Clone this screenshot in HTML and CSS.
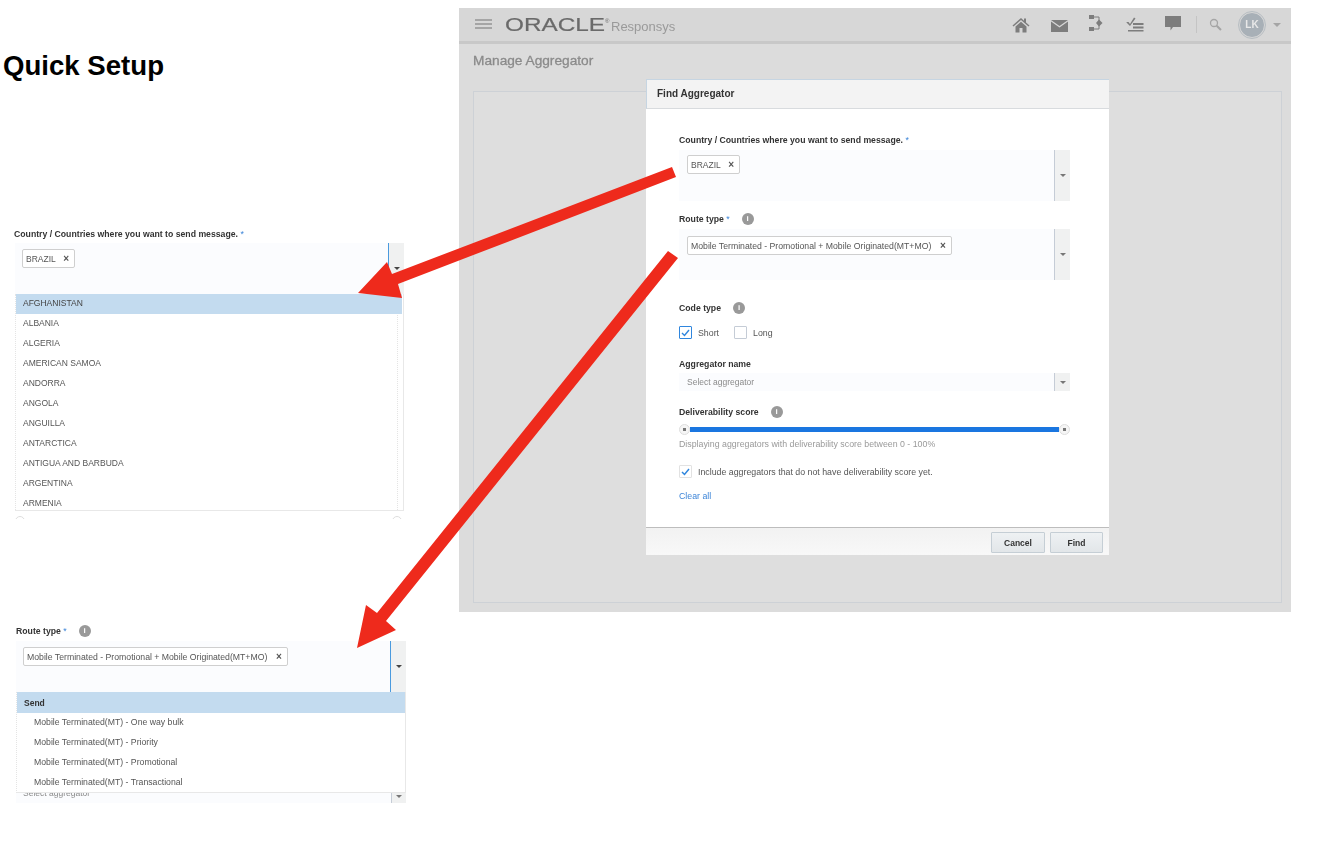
FILE: index.html
```html
<!DOCTYPE html>
<html lang="en">
<head>
    <meta charset="UTF-8">
    <meta name="viewport" content="width=device-width, initial-scale=1.0">
    <title>Quick Setup</title>
    <link rel="stylesheet" href="styles.css">
</head>
<body>
<div class="slide">
    <!-- Left column: title and the two open pickers -->
    <div class="left-col">
        <h1 class="slide-title">Quick Setup</h1>

        <div class="picker picker-country">
            <div class="label label-outdent">Country / Countries where you want to send message. <span class="req">*</span></div>
            <div class="field field-tall field-focus">
                <div class="field-main"><span class="chip"><span class="chip-text">BRAZIL</span><span class="chip-x">×</span></span></div>
                <div class="field-arrow"><span class="caret caret-dark"></span></div>
            </div>
            <div class="list list-country">
                <div class="list-inner">
                    <div class="opt opt-active">AFGHANISTAN</div>
                    <div class="opt">ALBANIA</div>
                    <div class="opt">ALGERIA</div>
                    <div class="opt">AMERICAN SAMOA</div>
                    <div class="opt">ANDORRA</div>
                    <div class="opt">ANGOLA</div>
                    <div class="opt">ANGUILLA</div>
                    <div class="opt">ANTARCTICA</div>
                    <div class="opt">ANTIGUA AND BARBUDA</div>
                    <div class="opt">ARGENTINA</div>
                    <div class="opt">ARMENIA</div>
                </div>
            </div>
            <div class="peek-handles"><span class="peek-handle"></span><span class="peek-handle"></span></div>
        </div>

        <div class="picker picker-route">
            <div class="label">Route type <span class="req">*</span><span class="info info-left">i</span></div>
            <div class="field field-tall field-focus">
                <div class="field-main"><span class="chip chip-long"><span class="chip-text">Mobile Terminated - Promotional + Mobile Originated(MT+MO)</span><span class="chip-x">×</span></span></div>
                <div class="field-arrow"><span class="caret caret-dark"></span></div>
            </div>
            <div class="list list-route">
                <div class="opt opt-active opt-group">Send</div>
                <div class="opt opt-sub">Mobile Terminated(MT) - One way bulk</div>
                <div class="opt opt-sub">Mobile Terminated(MT) - Priority</div>
                <div class="opt opt-sub">Mobile Terminated(MT) - Promotional</div>
                <div class="opt opt-sub">Mobile Terminated(MT) - Transactional</div>
            </div>
            <div class="peek-select">
                <span class="peek-text">Select aggregator</span>
                <div class="peek-arrow"><span class="caret"></span></div>
            </div>
        </div>
    </div>

    <!-- Right: dimmed app with the modal on top -->
    <div class="app">
        <header class="app-header">
            <div class="hamburger"><span></span><span></span><span></span></div>
            <svg class="wordmark" width="106" height="20" viewBox="0 0 106 20"><text x="0" y="16" textLength="100" lengthAdjust="spacingAndGlyphs">ORACLE</text><text class="wordmark-r" x="100" y="8">®</text></svg>
            <span class="product">Responsys</span>
            <div class="header-icons">
                <span class="hicon"><svg width="18" height="16" viewBox="0 0 18 16"><path d="M9 1L0.5 8.5l1 1L9 3l7.500 6.500 1-1L14 5.500V1.500h-2v2.200z" fill="#7d7d7d"/><path d="M3.500 9.500L9 4.700l5.500 4.800V15.500H10.500V11h-3v4.500H3.500z" fill="#7d7d7d"/></svg></span>
                <span class="hicon hicon-low"><svg width="17" height="12" viewBox="0 0 17 12"><path d="M0 0h17L8.500 6z" fill="#7d7d7d"/><path d="M0 1.500L8.500 7.500 17 1.500V12H0z" fill="#7d7d7d"/></svg></span>
                <span class="hicon hicon-high"><svg width="16" height="16" viewBox="0 0 16 16"><rect x="0" y="0" width="5" height="4" fill="#7d7d7d"/><rect x="0" y="12" width="5" height="4" fill="#7d7d7d"/><path d="M5 2h5v4M5 14h5v-4" fill="none" stroke="#7d7d7d"/><path d="M10 4.500l3.500 3.500-3.500 3.500-3-3.500z" fill="#7d7d7d"/></svg></span>
                <span class="hicon"><svg width="18" height="15" viewBox="0 0 18 15"><path d="M0.500 5l2 0 1.500 2L8 0.500l1.500 1L4 9 0.500 5.500z" fill="#7d7d7d"/><path d="M7 6h10.500v2H7zM7 9.500h10.500v2H7zM2 13h15.500v1.500H2z" fill="#7d7d7d"/></svg></span>
                <span class="hicon hicon-high"><svg width="16" height="15" viewBox="0 0 16 15"><path d="M0 0h16v11H8l-2.500 3.500V11H0z" fill="#7d7d7d"/></svg></span>
            </div>
            <span class="header-divider"></span>
            <span class="hicon-search"><svg width="13" height="13" viewBox="0 0 13 13"><circle cx="5" cy="5" r="3.500" fill="none" stroke="#a5a5a5" stroke-width="1.300"/><path d="M7.700 7.700L12 12" stroke="#a5a5a5" stroke-width="2"/></svg></span>
            <span class="avatar">LK</span>
            <span class="caret caret-avatar"></span>
        </header>

        <div class="page-title">Manage Aggregator</div>
        <div class="page-box"></div>

        <div class="modal">
            <div class="modal-head">Find Aggregator</div>
            <div class="modal-body">
                <div class="label">Country / Countries where you want to send message. <span class="req">*</span></div>
                <div class="field field-tall field-first field-country">
                    <div class="field-main"><span class="chip"><span class="chip-text">BRAZIL</span><span class="chip-x">×</span></span></div>
                    <div class="field-arrow"><span class="caret"></span></div>
                </div>

                <div class="label label-route">Route type <span class="req">*</span><span class="info info-route">i</span></div>
                <div class="field field-tall field-first field-route">
                    <div class="field-main"><span class="chip chip-long"><span class="chip-text">Mobile Terminated - Promotional + Mobile Originated(MT+MO)</span><span class="chip-x">×</span></span></div>
                    <div class="field-arrow"><span class="caret"></span></div>
                </div>

                <div class="label label-code">Code type<span class="info info-code">i</span></div>
                <div class="checks">
                    <span class="check check-on"><svg width="9" height="8" viewBox="0 0 9 8"><path d="M1 4l2.500 2.500L8 1" fill="none" stroke="#2f86de" stroke-width="1.400"/></svg></span>
                    <span class="check-text">Short</span>
                    <span class="check check-next"></span>
                    <span class="check-text">Long</span>
                </div>

                <div class="label label-agg">Aggregator name</div>
                <div class="field field-short">
                    <div class="field-main field-main-text">Select aggregator</div>
                    <div class="field-arrow"><span class="caret"></span></div>
                </div>

                <div class="label label-score">Deliverability score<span class="info info-score">i</span></div>
                <div class="slider">
                    <span class="slider-handle"></span>
                    <span class="slider-track"></span>
                    <span class="slider-handle"></span>
                </div>
                <div class="helper">Displaying aggregators with deliverability score between 0 - 100%</div>

                <div class="checks checks-include">
                    <span class="check check-soft"><svg width="9" height="8" viewBox="0 0 9 8"><path d="M1 4l2.500 2.500L8 1" fill="none" stroke="#2f86de" stroke-width="1.500"/></svg></span>
                    <span class="check-text">Include aggregators that do not have deliverability score yet.</span>
                </div>
                <a class="clear-all" href="#">Clear all</a>
            </div>
            <div class="modal-foot">
                <button class="btn">Cancel</button>
                <button class="btn btn-find">Find</button>
            </div>
        </div>
    </div>

    <!-- Red arrows lie over everything -->
    <svg class="arrows" width="1324" height="855" viewBox="0 0 1324 855">
        <polygon points="672,167 676,177 398,284 402,298 358,293 387,262 392,274" fill="#ee2a1c"/>
        <polygon points="668,251 678,258 386,621 396,630 357,648 366,605 377,613" fill="#ee2a1c"/>
    </svg>
</div>
</body>
</html>
```

FILE: styles.css
```css
/* General */
body {
    margin: 0;
    background-color: #fff;
    font-family: "Liberation Sans", Arial, sans-serif;
    color: #444;
}

.slide {
    position: relative;
    display: flex;
    width: 1324px;
    height: 855px;
    overflow: hidden;
}

.left-col {
    width: 459px;
    flex-shrink: 0;
}

.slide-title {
    margin: 51px 0 0 3px;
    font-size: 27.6px;
    line-height: 30px;
    font-weight: bold;
    color: #000;
}

/* Shared form bits */
.label {
    font-size: 8.7px;
    line-height: 12px;
    font-weight: bold;
    color: #333;
    display: flex;
    align-items: center;
    white-space: pre;
}

.req {
    color: #3d85d8;
    font-weight: normal;
}

.info {
    display: inline-block;
    width: 12px;
    height: 12px;
    border-radius: 50%;
    background-color: #999;
    color: #fff;
    font-size: 8px;
    line-height: 12px;
    text-align: center;
    font-weight: bold;
}

.field {
    display: flex;
    background-color: #fbfcfe;
}

.field-tall {
    height: 51px;
}

.field-short {
    height: 18px;
    margin-top: 3px;
}

.field-first {
    margin-top: 4px;
}

.field-main {
    flex: 1;
    display: flex;
    align-items: flex-start;
    padding: 6px 0 0 7px;
    box-sizing: border-box;
}

.field-country .field-main {
    padding: 5px 0 0 8px;
}

.field-route .field-main {
    padding: 7px 0 0 8px;
}

.field-main-text {
    display: block;
    padding: 0 0 0 8px;
    font-size: 8.5px;
    line-height: 18px;
    color: #8a8a8a;
}

.field-arrow {
    width: 15px;
    background-color: #f0f1f1;
    border-left: 1px solid #c5ccd6;
    display: flex;
    align-items: center;
    justify-content: center;
}

.field-focus .field-arrow {
    border-left-color: #4a9ade;
}

.caret {
    width: 0;
    height: 0;
    border-left: 3.5px solid transparent;
    border-right: 3.5px solid transparent;
    border-top: 3px solid #777;
}

.caret-dark {
    border-top-color: #444;
}

.chip {
    display: inline-flex;
    align-items: center;
    box-sizing: border-box;
    height: 19px;
    width: 53px;
    padding: 0 2px 0 3px;
    background-color: #fff;
    border: 1px solid #cfcfcf;
    border-radius: 2px;
    font-size: 8.5px;
    color: #555;
}

.chip-long {
    width: 265px;
    font-size: 8.7px;
}

.chip-text {
    flex: 1;
    white-space: nowrap;
}

.chip-long .chip-text {
    flex: 0 0 244px;
}

.chip-x {
    font-size: 10px;
    font-weight: bold;
    color: #555;
    line-height: 10px;
    margin: 0 3px 0 0;
}

.chip-long .chip-x {
    margin: 0 4px 0 5px;
}

/* Left pickers */
.picker {
    filter: blur(0.25px);
}

.picker-country {
    margin: 147px 0 0 15px;
    width: 389px;
}

.picker-route {
    margin: 106px 0 0 16px;
    width: 390px;
}

.label-outdent {
    margin-left: -1px;
}

.picker .label {
    margin-bottom: 3px;
}

.picker-route .label {
    margin-bottom: 4px;
}

.info-left {
    margin-left: 12px;
}

.list {
    background-color: #fff;
    overflow: hidden;
    box-sizing: border-box;
    border-bottom: 1px solid #e8e8e8;
}

.list-country {
    height: 217px;
    border-right: 1px solid #e8e8e8;
}

.list-inner {
    width: 381px;
    border-left: 1px dotted #e4e4e4;
    border-right: 1px dotted #e4e4e4;
}

.list-route {
    height: 101px;
    border-left: 1px dotted #e4e4e4;
    border-right: 1px solid #e8e8e8;
}

.opt {
    height: 20px;
    line-height: 18px;
    padding-left: 7px;
    font-size: 8.5px;
    color: #555;
    white-space: nowrap;
}

.opt-active {
    background-color: #c3dbef;
    color: #444;
}

.list-inner .opt-active {
    margin-right: -5px;
}

.opt-group {
    height: 21px;
    line-height: 22px;
    font-weight: bold;
    color: #333;
}

.opt-sub {
    padding-left: 17px;
    font-size: 8.7px;
}

.peek-handles {
    display: flex;
    justify-content: space-between;
    height: 3px;
    margin-top: 5px;
    padding: 0 2px 0 0;
    overflow: hidden;
}

.peek-handle {
    width: 10px;
    height: 10px;
    border: 1px solid #ddd;
    border-radius: 50%;
    box-sizing: border-box;
}

.peek-select {
    display: flex;
    height: 10px;
    overflow: hidden;
    background-color: #fbfcfe;
}

.peek-text {
    flex: 1;
    margin-top: -6px;
    padding-left: 7px;
    font-size: 8.5px;
    line-height: 12px;
    color: #8a8a8a;
}

.peek-arrow {
    width: 15px;
    background-color: #f0f1f1;
    border-left: 1px solid #c5ccd6;
    display: flex;
    justify-content: center;
    padding-top: 2px;
    box-sizing: border-box;
}

/* Dimmed app */
.app {
    position: relative;
    width: 832px;
    height: 604px;
    margin-top: 8px;
    background-color: #dcdcdc;
    display: flex;
    flex-direction: column;
    filter: blur(0.25px);
}

.app-header {
    display: flex;
    align-items: center;
    height: 33px;
    padding: 0 10px 0 16px;
    background-color: #d7d7d7;
    border-bottom: 3px solid #c8c8c8;
}

.hamburger {
    width: 17px;
    margin-right: 13px;
}

.hamburger span {
    display: block;
    height: 2px;
    margin-bottom: 2px;
    background-color: #a5a5a5;
}

.wordmark {
    display: block;
}

.wordmark text {
    font-size: 18px;
    fill: #6a6a6a;
    stroke: #6a6a6a;
    stroke-width: 0.2px;
}

.wordmark .wordmark-r {
    font-size: 6px;
    stroke-width: 0;
}

.product {
    margin-top: 3px;
    font-size: 13px;
    color: #9a9a9a;
}

.header-icons {
    display: flex;
    margin-left: auto;
}

.hicon {
    width: 38px;
    display: flex;
    justify-content: center;
    align-items: center;
}

.hicon svg {
    display: block;
}

.hicon-low {
    padding-top: 3px;
}

.hicon-high {
    padding-bottom: 3px;
}

.header-divider {
    width: 1px;
    height: 17px;
    margin-left: 4px;
    background-color: #c4c4c4;
}

.hicon-search {
    margin: 0 17px 0 12px;
    display: flex;
}

.avatar {
    width: 24px;
    height: 24px;
    border-radius: 50%;
    background-color: #a8b0b7;
    border: 1px solid #d7d7d7;
    outline: 1px solid #b8bec3;
    outline-offset: 0;
    color: #e8e8e8;
    font-size: 10px;
    font-weight: bold;
    line-height: 24px;
    text-align: center;
}

.caret-avatar {
    margin-left: 8px;
    border-top-color: #a5a5a5;
    border-left-width: 4px;
    border-right-width: 4px;
    border-top-width: 4px;
}

.page-title {
    margin: 9px 0 0 14px;
    font-size: 13.7px;
    line-height: 16px;
    -webkit-text-stroke: 0.3px #8a8a8a;
    color: #8a8a8a;
}

.page-box {
    height: 510px;
    margin: 22px 9px 0 14px;
    background-color: #dedede;
    border: 1px solid #cdd1d6;
}

/* Modal */
.modal {
    position: absolute;
    left: 187px;
    top: 71px;
    width: 463px;
    height: 476px;
    background-color: #fff;
    display: flex;
    flex-direction: column;
}

.modal-head {
    height: 28px;
    padding-left: 10px;
    background-color: #f3f3f3;
    border-top: 1px solid #c6d5e2;
    border-left: 1px solid #c6d5e2;
    font-size: 10px;
    line-height: 28px;
    font-weight: bold;
    color: #333;
    border-bottom: 1px solid #d8dbde;
}

.modal-body {
    flex: 1;
    padding: 25px 39px 0 33px;
}

.label-route {
    margin-top: 12px;
}

.label-code {
    margin-top: 22px;
}

.label-agg {
    margin-top: 19px;
}

.label-score {
    margin-top: 15px;
}

.info-route {
    margin-left: 12px;
}

.info-code {
    margin-left: 12px;
}

.info-score {
    margin-left: 12px;
}

.checks {
    display: flex;
    align-items: center;
    margin-top: 12px;
}

.check {
    width: 13px;
    height: 13px;
    box-sizing: border-box;
    border: 1px solid #c5ccd6;
    border-radius: 1px;
    display: flex;
    align-items: center;
    justify-content: center;
}

.check-on {
    border-color: #2f86de;
}

.check-soft {
    border-color: #e2e2e2;
}

.check-next {
    margin-left: 15px;
}

.check-text {
    margin-left: 6px;
    font-size: 8.8px;
    color: #555;
}

.checks-include {
    margin-top: 15px;
}

.slider {
    display: flex;
    align-items: center;
    height: 11px;
    margin-top: 6px;
}

.slider-handle {
    width: 11px;
    height: 11px;
    flex-shrink: 0;
    box-sizing: border-box;
    border: 1px solid #ddd;
    border-radius: 50%;
    background: radial-gradient(circle, #777 0, #777 1.500px, #f5f5f5 2px);
}

.slider-track {
    flex: 1;
    height: 5px;
    background-color: #1a76e0;
}

.helper {
    margin-top: 3px;
    font-size: 8.8px;
    line-height: 12px;
    color: #999;
}

.clear-all {
    display: block;
    margin-top: 12px;
    font-size: 8.8px;
    line-height: 12px;
    color: #3d85d8;
    text-decoration: none;
}

.modal-foot {
    display: flex;
    justify-content: flex-end;
    gap: 5px;
    height: 28px;
    padding: 4px 6px 0 0;
    box-sizing: border-box;
    background: linear-gradient(#f2f2f2, #f8f8f8);
    border-top: 1px solid #bdbdbd;
}

.btn {
    width: 54px;
    height: 21px;
    background: linear-gradient(#eef1f3, #e2e6e9);
    border: 1px solid #c5ced5;
    border-radius: 1px;
    font-family: inherit;
    font-size: 8.5px;
    font-weight: bold;
    color: #333;
    padding: 0;
}

.btn-find {
    width: 53px;
}

/* Arrows */
.arrows {
    position: absolute;
    left: 0;
    top: 0;
    pointer-events: none;
}
```
